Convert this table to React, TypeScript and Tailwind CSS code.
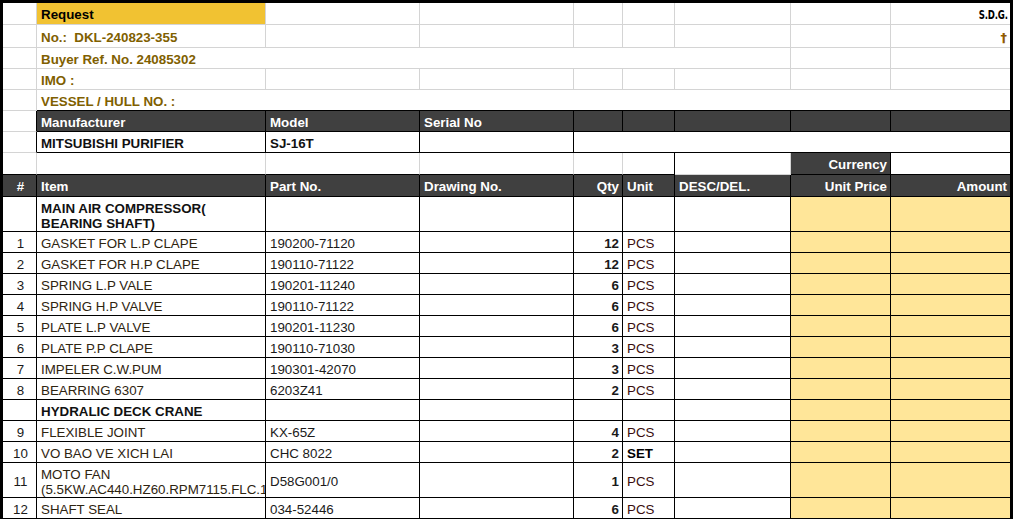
const cols = "grid grid-cols-[34px_229px_154px_154px_49px_52px_116px_100px_119px]";

type CellProps = {
  className?: string;
  children?: React.ReactNode;
};

// one spreadsheet cell: right + bottom border, content vertically centred (sits a touch low, like Excel)
function C({ className = "", children }: CellProps) {
  return (
    <div className={`flex items-center overflow-hidden whitespace-nowrap border-r border-b pt-[3px] ${className}`}>
      {children}
    </div>
  );
}

const items = [
  { n: "1", item: "GASKET FOR L.P CLAPE", part: "190200-71120", qty: 12, unit: "PCS" },
  { n: "2", item: "GASKET FOR H.P CLAPE", part: "190110-71122", qty: 12, unit: "PCS" },
  { n: "3", item: "SPRING L.P VALE", part: "190201-11240", qty: 6, unit: "PCS" },
  { n: "4", item: "SPRING H.P VALVE", part: "190110-71122", qty: 6, unit: "PCS" },
  { n: "5", item: "PLATE L.P VALVE", part: "190201-11230", qty: 6, unit: "PCS" },
  { n: "6", item: "PLATE P.P CLAPE", part: "190110-71030", qty: 3, unit: "PCS" },
  { n: "7", item: "IMPELER C.W.PUM", part: "190301-42070", qty: 3, unit: "PCS" },
  { n: "8", item: "BEARRING 6307", part: "6203Z41", qty: 2, unit: "PCS" },
];

const crane = [
  { n: "9", item: "FLEXIBLE JOINT", part: "KX-65Z", qty: 4, unit: "PCS" },
  { n: "10", item: "VO BAO VE XICH LAI", part: "CHC 8022", qty: 2, unit: "SET" },
];

function ItemRow({ n, item, part, qty, unit }: { n: string; item: React.ReactNode; part: string; qty: number; unit: string }) {
  return (
    <div className={`${cols} h-[21px]`}>
      <C className="justify-center border-black pl-[2px]">{n}</C>
      <C className="border-black pl-[4px] text-[#2e2410]">{item}</C>
      <C className="border-black pl-[4px]">{part}</C>
      <C className="border-black" />
      <C className="justify-end border-black pr-[3px] font-bold">{qty}</C>
      <C className={`border-black pl-[4px] ${unit === "SET" ? "font-bold text-black" : "text-[#3a0d0d]"}`}>{unit}</C>
      <C className="border-black" />
      <C className="border-black bg-[#ffe699]" />
      <C className="border-r-0 border-black bg-[#ffe699]" />
    </div>
  );
}

function SectionRow({ children, h }: { children: React.ReactNode; h: string }) {
  return (
    <div className={`${cols} ${h}`}>
      <C className="border-black" />
      <C className="border-black pl-[4px] font-bold leading-[15px] text-[#111]">{children}</C>
      <C className="border-black" />
      <C className="border-black" />
      <C className="border-black" />
      <C className="border-black" />
      <C className="border-black" />
      <C className="border-black bg-[#ffe699]" />
      <C className="border-r-0 border-black bg-[#ffe699]" />
    </div>
  );
}

export default function App() {
  const gold = "font-bold text-[#7f6000]";
  return (
    <div className="h-[519px] w-[1013px] overflow-hidden bg-white font-['Liberation_Sans',Arial,sans-serif] text-[13.33px] text-[#1a1a1a]">
      <div className="border-x-[3px] border-t-[3px] border-black">
        {/* Request */}
        <div className={`${cols} h-[22px]`}>
          <C className="border-[#d4d4d4]" />
          <C className="border-[#d4d4d4] bg-[#f1c232] pl-[4px] font-bold text-black">Request</C>
          <C className="border-[#d4d4d4]" />
          <C className="border-[#d4d4d4]" />
          <C className="border-[#d4d4d4]" />
          <C className="border-[#d4d4d4]" />
          <C className="border-[#d4d4d4]" />
          <C className="border-[#d4d4d4]" />
          <C className="justify-end border-r-0 border-[#d4d4d4] pr-[2px]">
            <span className="inline-block origin-right scale-x-[0.66] font-['DejaVu_Sans',sans-serif] text-[13px] font-bold tracking-tight text-black">
              S.D.G.
            </span>
          </C>
        </div>

        {/* No. */}
        <div className={`${cols} h-[23px]`}>
          <C className="border-[#d4d4d4]" />
          <C className={`border-[#d4d4d4] whitespace-pre pl-[4px] ${gold}`}>No.:  DKL-240823-355</C>
          <C className="border-[#d4d4d4]" />
          <C className="border-[#d4d4d4]" />
          <C className="border-[#d4d4d4]" />
          <C className="border-[#d4d4d4]" />
          <C className="border-[#d4d4d4]" />
          <C className="border-[#d4d4d4]" />
          <C className="justify-end border-r-0 border-[#d4d4d4] pr-[3px]">
            <span className="font-['DejaVu_Sans',sans-serif] text-[13px] font-bold text-[#8f5a00]">†</span>
          </C>
        </div>

        {/* Buyer ref */}
        <div className={`${cols} h-[21px]`}>
          <C className="border-[#d4d4d4]" />
          <C className={`col-span-6 border-[#d4d4d4] pl-[4px] ${gold}`}>Buyer Ref. No. 24085302</C>
          <C className="border-[#d4d4d4]" />
          <C className="border-r-0 border-[#d4d4d4]" />
        </div>

        {/* IMO */}
        <div className={`${cols} h-[21px]`}>
          <C className="border-[#d4d4d4]" />
          <C className={`border-[#d4d4d4] pl-[4px] ${gold}`}>IMO :</C>
          <C className="border-[#d4d4d4]" />
          <C className="border-[#d4d4d4]" />
          <C className="border-[#d4d4d4]" />
          <C className="border-[#d4d4d4]" />
          <C className="border-[#d4d4d4]" />
          <C className="border-[#d4d4d4]" />
          <C className="border-r-0 border-[#d4d4d4]" />
        </div>

        {/* Vessel */}
        <div className={`${cols} h-[21px]`}>
          <C className="border-[#d4d4d4]" />
          <C className={`col-span-8 border-r-0 border-black pl-[4px] ${gold}`}>VESSEL / HULL NO. :</C>
        </div>

        {/* Manufacturer header */}
        <div className={`${cols} h-[21px] font-bold text-white`}>
          <C className="border-r-black border-b-[#d4d4d4]" />
          <C className="border-black bg-[#404040] pl-[4px]">Manufacturer</C>
          <C className="border-black bg-[#404040] pl-[4px]">Model</C>
          <C className="border-black bg-[#404040] pl-[4px]">Serial No</C>
          <C className="border-black bg-[#404040]" />
          <C className="border-black bg-[#404040]" />
          <C className="border-black bg-[#404040]" />
          <C className="border-black bg-[#404040]" />
          <C className="border-r-0 border-black bg-[#404040]" />
        </div>

        {/* Manufacturer values */}
        <div className={`${cols} h-[21px] font-bold text-[#111]`}>
          <C className="border-r-black border-b-[#d4d4d4]" />
          <C className="border-black pl-[4px]">MITSUBISHI PURIFIER</C>
          <C className="border-black pl-[4px]">SJ-16T</C>
          <C className="border-black" />
          <C className="col-span-5 border-r-0 border-black" />
        </div>

        {/* Currency row */}
        <div className={`${cols} h-[22px]`}>
          <C className="border-[#d4d4d4] border-b-black" />
          <C className="border-[#d4d4d4] border-b-black" />
          <C className="border-[#d4d4d4] border-b-black" />
          <C className="border-[#d4d4d4] border-b-black" />
          <C className="border-[#d4d4d4] border-b-black" />
          <C className="border-r-black border-b-black" />
          <C className="border-r-[#d4d4d4] border-b-[#d4d4d4]" />
          <C className="justify-end border-black bg-[#404040] pr-[3px] font-bold text-white">Currency</C>
          <C className="border-r-0 border-black" />
        </div>

        {/* Table header */}
        <div className={`${cols} h-[22px] bg-[#404040] font-bold text-white`}>
          <C className="justify-center border-black pl-[2px]">#</C>
          <C className="border-black pl-[4px]">Item</C>
          <C className="border-black pl-[4px]">Part No.</C>
          <C className="border-black pl-[4px]">Drawing No.</C>
          <C className="justify-end border-black pr-[3px]">Qty</C>
          <C className="border-black pl-[4px]">Unit</C>
          <C className="border-black pl-[4px]">DESC/DEL.</C>
          <C className="justify-end border-black pr-[3px]">Unit Price</C>
          <C className="justify-end border-r-0 border-black pr-[3px]">Amount</C>
        </div>

        <SectionRow h="h-[35px]">
          <span>
            MAIN AIR COMPRESSOR(
            <br />
            BEARING SHAFT)
          </span>
        </SectionRow>
        {items.map((r) => (
          <ItemRow key={r.n} {...r} />
        ))}
        <SectionRow h="h-[21px]">HYDRALIC DECK CRANE</SectionRow>
        {crane.map((r) => (
          <ItemRow key={r.n} {...r} />
        ))}

        {/* two-line item, second line runs past the cell edge as in the sheet */}
        <div className={`${cols} h-[35px]`}>
          <C className="justify-center border-black pl-[2px]">11</C>
          <C className="border-black pl-[4px] leading-[15px] text-[#2e2410]">
            <span>
              MOTO FAN
              <br />
              (5.5KW.AC440.HZ60.RPM7115.FLC.1
            </span>
          </C>
          <C className="border-black pl-[4px]">D58G001/0</C>
          <C className="border-black" />
          <C className="justify-end border-black pr-[3px] font-bold">1</C>
          <C className="border-black pl-[4px] text-[#3a0d0d]">PCS</C>
          <C className="border-black" />
          <C className="border-black bg-[#ffe699]" />
          <C className="border-r-0 border-black bg-[#ffe699]" />
        </div>

        <ItemRow n="12" item="SHAFT SEAL" part="034-52446" qty={6} unit="PCS" />
      </div>
    </div>
  );
}
